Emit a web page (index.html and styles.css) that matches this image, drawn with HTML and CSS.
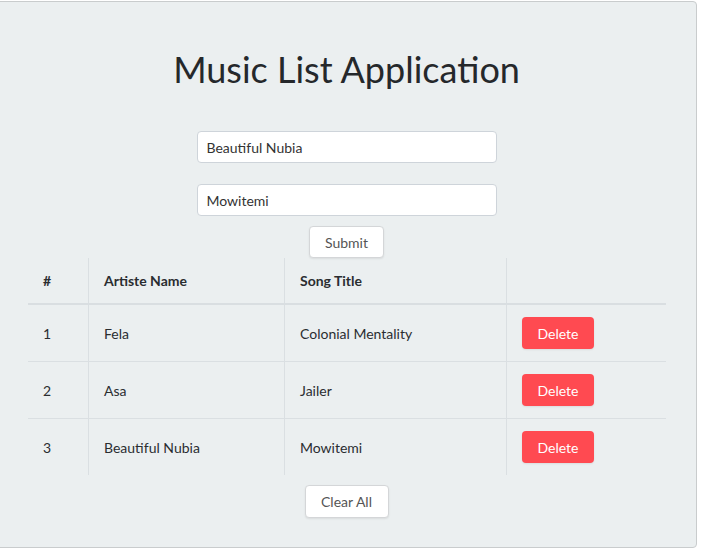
FILE: index.html
```html
<!DOCTYPE html>
<html>
<head>
<meta charset="utf-8">
<link rel="stylesheet" href="styles.css">
</head>
<body>
<div class="panel">
  <h1 class="title">Music List Application</h1>
  <form class="form">
    <input class="field" type="text" value="Beautiful Nubia">
    <input class="field field-second" type="text" value="Mowitemi">
    <button type="button" class="btn btn-light btn-submit">Submit</button>
  </form>
  <table class="list">
    <thead>
      <tr><th class="c-num">#</th><th class="c-artist">Artiste Name</th><th class="c-song">Song Title</th><th class="c-act"></th></tr>
    </thead>
    <tbody>
      <tr><td>1</td><td>Fela</td><td>Colonial Mentality</td><td><button type="button" class="btn btn-danger">Delete</button></td></tr>
      <tr><td>2</td><td>Asa</td><td>Jailer</td><td><button type="button" class="btn btn-danger">Delete</button></td></tr>
      <tr><td>3</td><td>Beautiful Nubia</td><td>Mowitemi</td><td><button type="button" class="btn btn-danger">Delete</button></td></tr>
    </tbody>
  </table>
  <div class="footer">
    <button type="button" class="btn btn-light btn-clear">Clear All</button>
  </div>
</div>
</body>
</html>
```
FILE: styles.css
```css
html, body {
  margin: 0;
  padding: 0;
  background: #ffffff;
}
body {
  font-family: "Lato", "Open Sans", sans-serif;
  font-size: 14px;
  color: #2a2d30;
}
.panel {
  box-sizing: border-box;
  width: 701px;
  height: 547px;
  margin: 1px 0 0 -4px;
  border: 1px solid #c9cccd;
  border-radius: 4px;
  background: #ebeff0;
  display: flex;
  flex-direction: column;
  align-items: center;
}
.title {
  margin: 42px 0 0 0;
  font-size: 36px;
  font-weight: 400;
  line-height: 50px;
  color: #25282b;
}
.form {
  margin-top: 37px;
  display: flex;
  flex-direction: column;
  align-items: center;
}
.field {
  box-sizing: border-box;
  width: 300px;
  height: 32px;
  padding: 0 9px;
  border: 1px solid #ced4da;
  border-radius: 4px;
  background: #fff;
  font-family: inherit;
  font-size: 14px;
  color: #333;
  outline: none;
}
.field-second {
  margin-top: 21px;
}
.btn {
  box-sizing: border-box;
  height: 32px;
  border-radius: 4px;
  font-family: inherit;
  font-size: 14px;
  padding: 0 14px;
  cursor: pointer;
}
.btn-light {
  background: #fff;
  border: 1px solid #d4d6d8;
  color: #555;
  box-shadow: 0 1px 2px rgba(0,0,0,0.08);
}
.btn-submit {
  margin-top: 10px;
  width: 75px;
  padding: 0;
}
.btn-danger {
  width: 72px;
  padding: 0;
  background: #ff4a51;
  border: none;
  color: #fff;
  box-shadow: 0 1px 2px rgba(0,0,0,0.08);
}
.list {
  width: 638px;
  border-collapse: collapse;
  margin-left: 1px;
}
.list th, .list td {
  text-align: left;
  padding: 12px 16px 12px 15px;
  line-height: 21px;
  border-left: 1px solid #dadfe2;
  vertical-align: middle;
}
.list th:first-child, .list td:first-child {
  border-left: none;
  padding-left: 15px;
}
.list th {
  font-weight: 700;
  border-bottom: 2px solid #d9dee1;
}
.list td {
  border-top: 1px solid #dadfe2;
}
.list tbody tr:first-child td {
  border-top: none;
}
.c-num { width: 29px; }
.c-artist { width: 164px; }
.c-song { width: 190px; }
.footer {
  margin-top: 10px;
}
.btn-clear {
  height: 33px;
  width: 84px;
  padding: 0;
}
```
